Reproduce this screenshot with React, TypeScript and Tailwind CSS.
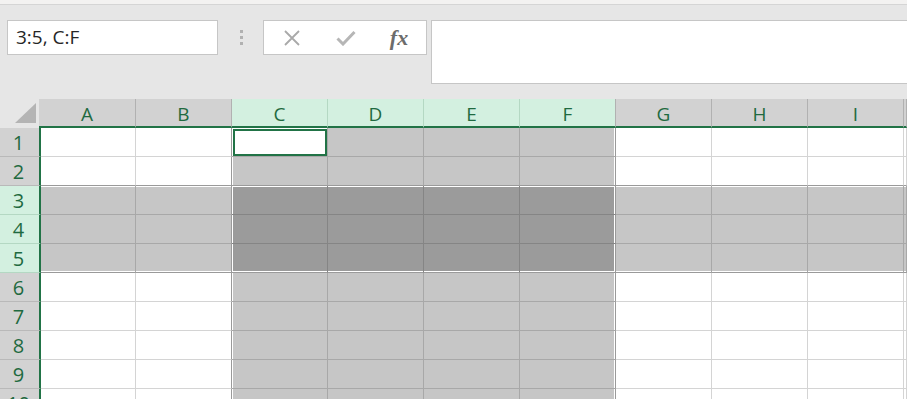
import React from "react";

const COLS = ["A", "B", "C", "D", "E", "F", "G", "H", "I", "J"];
const ROWS = [1, 2, 3, 4, 5, 6, 7, 8, 9, 10];

const isSelRow = (r: number) => r >= 3 && r <= 5;
const isSelCol = (c: number) => c >= 2 && c <= 5;

// widths for data rows (row header takes 41px incl. the green edge)
const DATA_WIDTH = ["w-[95px]", "w-[96px]", "w-[96px]", "w-[96px]", "w-[96px]", "w-[96px]", "w-[96px]", "w-[96px]", "w-[96px]", "flex-1"];
const HEAD_WIDTH = ["w-[97px]", "w-[96px]", "w-[96px]", "w-[96px]", "w-[96px]", "w-[96px]", "w-[96px]", "w-[96px]", "w-[96px]", "flex-1"];

const SHADE_BG = {
  white: "bg-white",
  gray: "bg-[#c6c6c6]",
  dark: "bg-[#9b9b9b]"
};

const SHADE_RIGHT = {
  white: "border-r-[#d4d4d4]",
  gray: "border-r-[#a8a8a8]",
  dark: "border-r-[#858585]"
};

const SHADE_BOTTOM = {
  white: "border-b-[#d4d4d4]",
  gray: "border-b-[#a8a8a8]",
  dark: "border-b-[#858585]"
};

function GridCell({ r, c }: { r: number; c: number }) {
  const shade = isSelRow(r) && isSelCol(c) ? "dark" : isSelRow(r) || isSelCol(c) ? "gray" : "white";
  const right = c === 1 || c === 5 ? "border-r-[#9a9a9a]" : SHADE_RIGHT[shade];
  const bottom = r === 2 || r === 5 ? "border-b-[#9a9a9a]" : SHADE_BOTTOM[shade];
  const active = r === 1 && c === 2;

  return (
    <div className={`h-[29px] shrink-0 border-r border-b ${DATA_WIDTH[c]} ${right} ${bottom}`}>
      <div
        className={`flex h-full w-full ${active ? "bg-white" : SHADE_BG[shade]} ${c === 2 ? "border-l border-l-white" : ""} ${
          c === 5 ? "border-r border-r-white" : ""
        } ${r === 3 ? "border-t border-t-white" : ""} ${r === 5 ? "border-b border-b-white" : ""}`}
      >
        {active ? <div className="mt-px h-[27px] w-full border-2 border-[#217346]" /> : null}
      </div>
    </div>
  );
}

function RowHeader({ r }: { r: number }) {
  const sel = isSelRow(r);
  return (
    <div
      className={`flex h-[29px] w-[41px] shrink-0 items-center justify-center border-r-2 border-r-[#217346] border-b pr-[2px] text-[20px] leading-none text-[#1f6a40] ${
        sel ? "bg-[#d3f0e0] border-b-[#b4d8c3]" : "bg-[#d2d2d2] border-b-[#b9b9b9]"
      }`}
    >
      <span className="pt-[1px]">{r}</span>
    </div>
  );
}

function ColHeader({ c }: { c: number }) {
  const sel = isSelCol(c);
  return (
    <div
      className={`flex h-[29px] shrink-0 items-center justify-center border-r border-b-2 border-b-[#217346] text-[19px] leading-none text-[#1f6a40] ${HEAD_WIDTH[c]} ${
        sel ? "bg-[#d3f0e0]" : "bg-[#d2d2d2]"
      } ${sel && c !== 5 ? "border-r-[#b4d8c3]" : "border-r-[#b1b1b1]"}`}
    >
      {c < 9 ? <span className="pt-[3px]">{COLS[c]}</span> : null}
    </div>
  );
}

function Toolbar() {
  return (
    <div className="h-[99px] shrink-0 bg-[#e6e6e6]">
      <div className="h-[5px] border-b border-[#d5d5d5] bg-[#f3f2f1]" />
      <div className="flex items-start pt-[15px]">
        <div className="ml-[7px] flex h-[35px] w-[211px] shrink-0 items-center border border-[#c6c6c6] bg-white pl-[8px] text-[19px] text-[#262626]">
          3:5, C:F
        </div>
        <div className="flex h-[35px] w-[45px] shrink-0 flex-col items-center justify-center gap-[3px] pl-[1px]">
          <span className="h-[3px] w-[3px] bg-[#b1b1b1]" />
          <span className="h-[3px] w-[3px] bg-[#b1b1b1]" />
          <span className="h-[3px] w-[3px] bg-[#b1b1b1]" />
        </div>
        <div className="flex h-[35px] w-[164px] shrink-0 items-center border border-[#c6c6c6] bg-white">
          <div className="flex w-[54px] justify-center pl-[1px]">
            <svg width="18" height="18" viewBox="0 0 18 18">
              <path d="M2 2 L16 16 M16 2 L2 16" stroke="#a9a9a9" strokeWidth="1.8" fill="none" />
            </svg>
          </div>
          <div className="flex w-[54px] justify-center pl-[2px]">
            <svg width="20" height="16" viewBox="0 0 20 16">
              <path d="M1.5 8.5 L7 14 L18.5 2" stroke="#b6b6b6" strokeWidth="3" fill="none" />
            </svg>
          </div>
          <div className="flex w-[54px] justify-center">
            <span className="font-['Liberation_Serif'] text-[22px] font-bold italic leading-none text-[#6c6c6c]">fx</span>
          </div>
        </div>
        <div className="ml-[4px] h-[64px] flex-1 border-y border-l border-[#c6c6c6] bg-white" />
      </div>
    </div>
  );
}

export default function App() {
  return (
    <div className="flex h-[399px] w-[907px] flex-col overflow-hidden bg-white font-['Open_Sans','Noto_Sans',sans-serif]">
      <Toolbar />
      <div className="flex shrink-0">
        <div className="relative h-[29px] w-[39px] shrink-0 bg-[#e6e6e6]">
          <svg className="absolute left-[15px] top-[4px]" width="22" height="21" viewBox="0 0 22 21">
            <path d="M0 20 L21 0 L21 20 Z" fill="#b4b4b4" />
          </svg>
        </div>
        {COLS.map((_, c) => (
          <ColHeader key={c} c={c} />
        ))}
      </div>
      {ROWS.map((r) => (
        <div key={r} className="flex shrink-0">
          <RowHeader r={r} />
          {COLS.map((_, c) => (
            <GridCell key={c} r={r} c={c} />
          ))}
        </div>
      ))}
    </div>
  );
}
